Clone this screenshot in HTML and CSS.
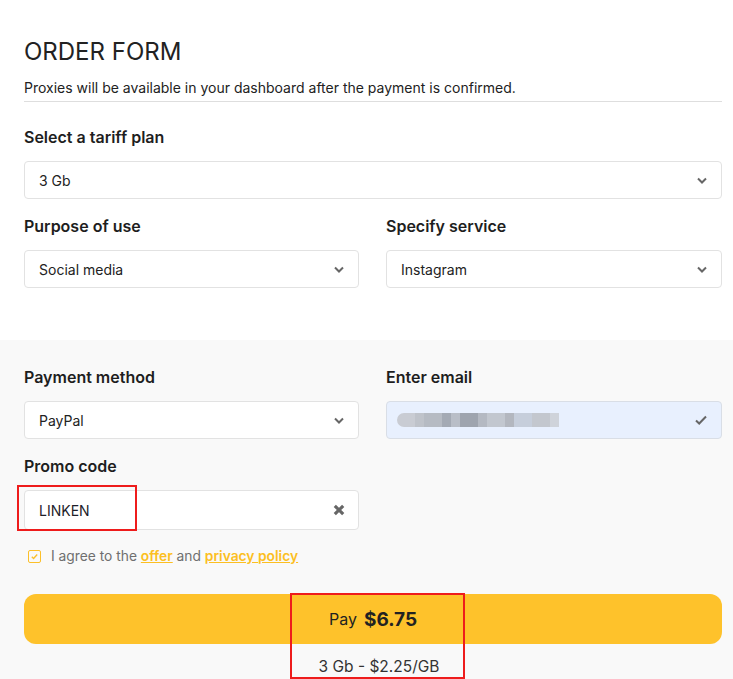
FILE: index.html
```html
<!DOCTYPE html>
<html>
<head>
<meta charset="utf-8">
<link rel="stylesheet" href="styles.css">
</head>
<body>
<div class="page">
  <section class="top">
    <h1 class="title">ORDER FORM</h1>
    <p class="subtitle">Proxies will be available in your dashboard after the payment is confirmed.</p>
    <div class="field">
      <div class="label">Select a tariff plan</div>
      <div class="box"><span>3 Gb</span><svg class="chev" viewBox="0 0 10 6"><path d="M1 1l4 4 4-4" /></svg></div>
    </div>
    <div class="row">
      <div class="field">
        <div class="label">Purpose of use</div>
        <div class="box"><span>Social media</span><svg class="chev" viewBox="0 0 10 6"><path d="M1 1l4 4 4-4" /></svg></div>
      </div>
      <div class="field">
        <div class="label">Specify service</div>
        <div class="box"><span>Instagram</span><svg class="chev" viewBox="0 0 10 6"><path d="M1 1l4 4 4-4" /></svg></div>
      </div>
    </div>
  </section>
  <section class="bottom">
    <div class="row">
      <div class="field">
        <div class="label">Payment method</div>
        <div class="box"><span>PayPal</span><svg class="chev" viewBox="0 0 10 6"><path d="M1 1l4 4 4-4" /></svg></div>
      </div>
      <div class="field">
        <div class="label">Enter email</div>
        <div class="box box-email"><span class="blur"></span><svg class="check" viewBox="0 0 12 10"><path d="M1 5.5l3.2 3L11 1.5" /></svg></div>
      </div>
    </div>
    <div class="row">
      <div class="field">
        <div class="label">Promo code</div>
        <div class="box box-promo"><span class="promo">LINKEN</span><svg class="cross" viewBox="0 0 10 10"><path d="M1.5 1.5l7 7M8.5 1.5l-7 7" /></svg></div>
      </div>
      <div></div>
    </div>
    <label class="agree">
      <span class="cb"><svg viewBox="0 0 10 10"><path d="M2 5.2l2 2 4-4.4" /></svg></span>
      <span>I agree to the <a class="link">offer</a> and <a class="link">privacy policy</a></span>
    </label>
    <button class="pay"><span class="pay-word">Pay</span><span class="pay-sum">$6.75</span></button>
    <div class="summary">3 Gb - $2.25/GB</div>
  </section>
  <div class="mark mark-promo"></div>
  <div class="mark mark-pay"></div>
</div>
</body>
</html>
```

FILE: styles.css
```css
* { box-sizing: border-box; }
html, body { margin: 0; padding: 0; }
body {
  font-family: "Inter", "Noto Sans", sans-serif;
  color: #222;
  background: #fff;
}
.page {
  position: relative;
  width: 733px;
  height: 679px;
  overflow: hidden;
}
.top {
  background: #fff;
  padding: 37px 11px 0 24px;
  height: 340px;
}
.title {
  margin: 0;
  font-size: 24px;
  line-height: 30px;
  font-weight: 400;
  color: #222;
}
.subtitle {
  margin: 12px 0 0;
  font-size: 14px;
  line-height: 18px;
  color: #222;
  padding-bottom: 4px;
  border-bottom: 1px solid #dedede;
}
.field {
  display: flex;
  flex-direction: column;
}
.top > .field { margin-top: 25px; }
.label {
  font-size: 16px;
  line-height: 20px;
  font-weight: 600;
  color: #1e1e1e;
  margin-bottom: 14px;
}
.box {
  height: 38px;
  border: 1px solid #e2e2e2;
  border-radius: 4px;
  background: #fff;
  display: flex;
  align-items: center;
  justify-content: space-between;
  padding: 0 14px 0 14px;
  font-size: 14px;
  color: #222;
}
.row {
  display: grid;
  grid-template-columns: 335px 336px;
  column-gap: 27px;
}
.top > .row { margin-top: 17px; }
.chev {
  width: 10px;
  height: 7px;
  fill: none;
  stroke: #666;
  stroke-width: 2;
}
.bottom {
  background: #f9f9f9;
  padding: 27px 11px 0 24px;
  height: 339px;
}
.bottom > .row + .row { margin-top: 17px; }
.box-email {
  background: #e8f0fe;
  border-color: #d9dee6;
  padding-left: 10px;
}
.blur {
  width: 162px;
  height: 14px;
  border-radius: 7px 0 0 7px;
  background:
    linear-gradient(to right,
      #c9ccd3 0 18px, #bfc3ca 18px 27px, #b6bbc3 27px 45px, #a4aab4 45px 54px,
      #b9bec7 54px 63px, #9ea4ae 63px 81px, #b4b9c2 81px 90px, #c2c7cf 90px 108px,
      #b3b7bf 108px 117px, #c6cedb 117px 135px, #c3c7ce 135px 153px, #cfd3da 153px 162px);
}
.check {
  width: 12px;
  height: 10px;
  fill: none;
  stroke: #666;
  stroke-width: 2;
}
.box-promo { height: 40px; padding-right: 13px; }
.promo { color: #1e1e2a; }
.cross {
  width: 12px;
  height: 12px;
  fill: none;
  stroke: #666;
  stroke-width: 2.6;
}
.agree {
  display: flex;
  align-items: center;
  gap: 10px;
  margin-top: 18px;
  padding-left: 4px;
  font-size: 13.8px;
  line-height: 16px;
  color: #6f6f6f;
}
.cb {
  width: 13px;
  height: 13px;
  border: 1.5px solid #fcc02a;
  border-radius: 2px;
  display: flex;
  align-items: center;
  justify-content: center;
}
.cb svg {
  width: 9px;
  height: 9px;
  fill: none;
  stroke: #fcc02a;
  stroke-width: 1.5;
}
.link {
  color: #fcbf22;
  font-weight: 600;
  text-decoration: underline;
}
.pay {
  margin-top: 30px;
  width: 698px;
  height: 50px;
  border: 0;
  border-radius: 12px;
  background: #fec22b;
  display: flex;
  align-items: center;
  justify-content: center;
  gap: 7px;
  font-family: inherit;
  color: #222;
  cursor: pointer;
}
.pay-word { font-size: 16px; }
.pay-sum { font-size: 19px; font-weight: 700; }
.summary {
  margin-top: 13px;
  padding-left: 12px;
  text-align: center;
  font-size: 15.5px;
  line-height: 20px;
  color: #333;
}
.mark {
  position: absolute;
  border: 2px solid #ee1c1c;
}
.mark-promo { left: 17px; top: 485px; width: 120px; height: 46px; }
.mark-pay { left: 290px; top: 593px; width: 175px; height: 86px; }
```
